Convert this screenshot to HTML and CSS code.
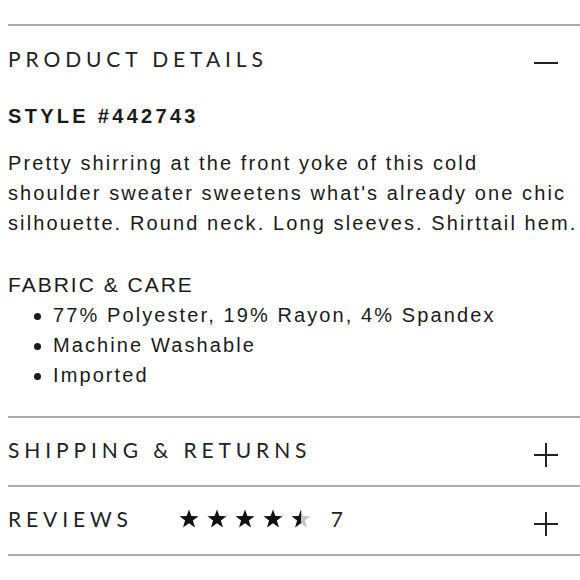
FILE: index.html
```html
<!DOCTYPE html>
<html>
<head>
<meta charset="utf-8">
<link rel="stylesheet" href="styles.css">
</head>
<body>
<div class="accordion">
  <section class="panel open">
    <div class="panel-head">
      <span class="panel-title">PRODUCT DETAILS</span>
      <span class="icon minus"></span>
    </div>
    <div class="panel-body">
      <div class="style-no">STYLE #442743</div>
      <p class="desc">Pretty shirring at the front yoke of this cold<br>shoulder sweater sweetens what's already one chic<br>silhouette. Round neck. Long sleeves. Shirttail hem.</p>
      <div class="care-title">FABRIC &amp; CARE</div>
      <ul class="care-list">
        <li>77% Polyester, 19% Rayon, 4% Spandex</li>
        <li>Machine Washable</li>
        <li>Imported</li>
      </ul>
    </div>
  </section>
  <section class="panel">
    <div class="panel-head row">
      <span class="panel-title">SHIPPING &amp; RETURNS</span>
      <span class="icon plus"></span>
    </div>
  </section>
  <section class="panel last">
    <div class="panel-head row">
      <span class="panel-title">REVIEWS</span>
      <span class="stars">
        <svg class="star" viewBox="0 0 20 19"><polygon points="10,0.5 12.4,7.1 19.5,7.2 13.9,11.5 16,18.5 10,14.3 4,18.5 6.1,11.5 0.5,7.2 7.6,7.1"/></svg>
        <svg class="star" viewBox="0 0 20 19"><polygon points="10,0.5 12.4,7.1 19.5,7.2 13.9,11.5 16,18.5 10,14.3 4,18.5 6.1,11.5 0.5,7.2 7.6,7.1"/></svg>
        <svg class="star" viewBox="0 0 20 19"><polygon points="10,0.5 12.4,7.1 19.5,7.2 13.9,11.5 16,18.5 10,14.3 4,18.5 6.1,11.5 0.5,7.2 7.6,7.1"/></svg>
        <svg class="star" viewBox="0 0 20 19"><polygon points="10,0.5 12.4,7.1 19.5,7.2 13.9,11.5 16,18.5 10,14.3 4,18.5 6.1,11.5 0.5,7.2 7.6,7.1"/></svg>
        <svg class="star" viewBox="0 0 20 19">
          <defs><linearGradient id="half"><stop offset="50%" stop-color="#111"/><stop offset="50%" stop-color="#c4c4c4"/></linearGradient></defs>
          <polygon fill="url(#half)" points="10,0.5 12.4,7.1 19.5,7.2 13.9,11.5 16,18.5 10,14.3 4,18.5 6.1,11.5 0.5,7.2 7.6,7.1"/>
        </svg>
        <span class="count">7</span>
      </span>
      <span class="icon plus"></span>
    </div>
  </section>
</div>
</body>
</html>
```

FILE: styles.css
```css
html, body {
  margin: 0;
  padding: 0;
  background: #fff;
}
body {
  color: #1a1a1a;
  font-family: "Liberation Sans", Arial, sans-serif;
}
.accordion {
  margin: 24px 0 0 8px;
}
.panel {
  border-top: 2px solid #ababab;
}
.panel.last {
  border-bottom: 2px solid #ababab;
}
.panel-head {
  display: flex;
  align-items: center;
  height: 64px;
}
.panel-head.row {
  box-sizing: border-box;
  height: 67px;
  padding-bottom: 4px;
}
.panel-title {
  font-family: "Lato", sans-serif;
  font-size: 21px;
  letter-spacing: 4.9px;
  color: #222;
}
.icon {
  margin-left: auto;
  margin-right: 22px;
  margin-top: 10px;
  width: 24px;
  height: 24px;
  position: relative;
}
.icon::before,
.icon::after {
  content: "";
  position: absolute;
  background: #222;
}
.minus::before {
  left: 0;
  right: 0;
  top: 11px;
  height: 2px;
}
.plus::before {
  left: 0;
  right: 0;
  top: 11px;
  height: 2px;
}
.plus::after {
  top: 0;
  bottom: 0;
  left: 11px;
  width: 2px;
}
.panel-body {
  padding: 14px 0 26px;
}
.style-no {
  font-weight: bold;
  font-size: 20px;
  line-height: 24px;
  letter-spacing: 3.3px;
}
.desc {
  margin: 20px 0 0;
  font-size: 20px;
  line-height: 30px;
  letter-spacing: 2.1px;
  white-space: nowrap;
}
.care-title {
  margin-top: 32px;
  font-size: 21px;
  line-height: 30px;
  letter-spacing: 2px;
}
.care-list {
  list-style: none;
  margin: 0;
  padding: 0 0 0 26px;
  font-size: 20px;
  line-height: 30px;
  letter-spacing: 2.1px;
}
.care-list li {
  display: flex;
  align-items: center;
}
.care-list li::before {
  content: "";
  width: 7px;
  height: 7px;
  border-radius: 50%;
  background: #1a1a1a;
  margin-right: 12px;
  margin-top: 2px;
}
.stars {
  display: flex;
  align-items: center;
  margin-left: 46px;
}
.star {
  width: 20px;
  height: 19px;
  margin-right: 8px;
  fill: #111;
}
.count {
  margin-left: 12px;
  font-family: "Lato", sans-serif;
  font-size: 21px;
  color: #222;
}
```
